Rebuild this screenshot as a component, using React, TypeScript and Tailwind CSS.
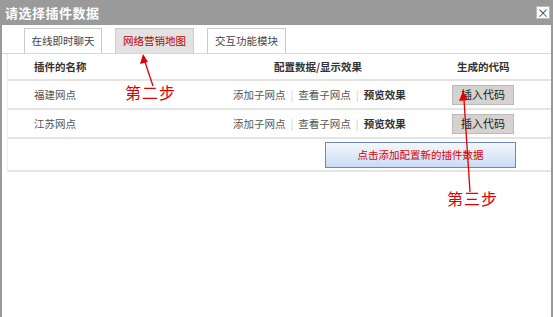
import React from 'react';

const font = { fontFamily: '"Noto Sans CJK SC", "Liberation Sans", sans-serif' };

const rows = ['福建网点', '江苏网点'];

const App: React.FC = () => {
  return (
    <div className="relative w-[553px] h-[317px] bg-white overflow-hidden text-[10.5px] text-[#333]" style={font}>
      {/* Title bar */}
      <div className="h-[25px] bg-[#9a9a9a] flex items-center justify-between pl-[5px] pr-[3px]">
        <span className="text-white text-[13px] font-bold leading-none tracking-[0.5px]">请选择插件数据</span>
        <button className="w-[14px] h-[13px] bg-white border border-[#bbb] flex items-center justify-center text-[#444] text-[12px] leading-none">×</button>
      </div>

      <div className="h-[292px] border-l-[2px] border-r-[2px] border-[#999] flex flex-col">
        {/* Tabs */}
        <div className="h-[29px] flex items-end pl-[22px] gap-[13px] border-b border-[#d8d8d8]">
          <div className="w-[78px] h-[25px] border border-b-0 border-[#ccc] bg-white flex items-center justify-center text-[#444]">在线即时聊天</div>
          <div className="w-[79px] h-[25px] border border-b-0 border-[#ccc] bg-[#e2e2e2] flex items-center justify-center text-[#c00000]">网络营销地图</div>
          <div className="w-[79px] h-[25px] border border-b-0 border-[#ccc] bg-white flex items-center justify-center text-[#444]">交互功能模块</div>
        </div>

        {/* Table */}
        <div className="ml-[5px] border-l border-[#eee]">
          <div className="h-[27px] flex items-center border-b-[2px] border-[#e4e4e4] font-bold text-[#333]">
            <div className="w-[222px] pl-[26px]">插件的名称</div>
            <div className="w-[205px] pl-[44px]">配置数据/显示效果</div>
            <div className="pl-[22px]">生成的代码</div>
          </div>
          {rows.map((r) => (
            <div key={r} className="h-[29px] flex items-center border-b-[2px] border-[#e4e4e4]">
              <div className="w-[222px] pl-[26px] text-[#555]">{r}</div>
              <div className="w-[222px] pl-[3px] flex items-center text-[#555]">
                <span>添加子网点</span>
                <span className="mx-[5px] text-[#ccc]">|</span>
                <span>查看子网点</span>
                <span className="mx-[5px] text-[#ccc]">|</span>
                <span className="font-bold text-[#333]">预览效果</span>
              </div>
              <button className="w-[62px] h-[20px] bg-[#d6d3ce] border border-[#bbb] text-[#222] text-[11px] leading-none flex items-center justify-center">插入代码</button>
            </div>
          ))}
          <div className="h-[33px] flex items-center border-b-[2px] border-[#e4e4e4]">
            <button className="ml-[317px] w-[191px] h-[26px] border border-[#6d88b8] bg-gradient-to-b from-[#f4f8fe] to-[#c9dcf4] text-[#e00000] text-[10.5px] flex items-center justify-center">点击添加配置新的插件数据</button>
          </div>
        </div>
      </div>

      {/* Annotations */}
      <svg className="absolute left-0 top-0 pointer-events-none" width="553" height="317">
        <line x1="153" y1="86" x2="145" y2="62" stroke="#e00000" strokeWidth="1.3" />
        <polygon points="143,54 140,64 148,62" fill="#e00000" />
        <line x1="470" y1="192" x2="464" y2="100" stroke="#e00000" strokeWidth="1.3" />
        <polygon points="463,91 459,101 468,100" fill="#e00000" />
      </svg>
      <div className="absolute left-[125px] top-[84px] text-[16px] text-[#e00000] leading-none tracking-[1px]">第二步</div>
      <div className="absolute left-[447px] top-[190px] text-[16px] text-[#e00000] leading-none tracking-[1px]">第三步</div>
    </div>
  );
};

export default App;
